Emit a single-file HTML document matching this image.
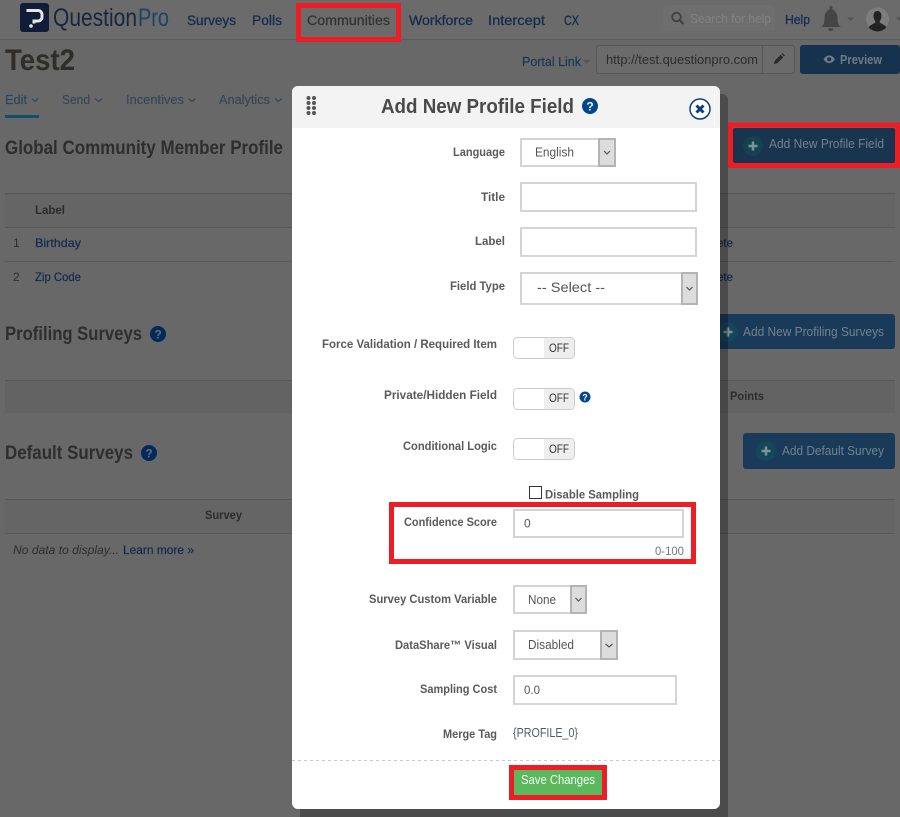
<!DOCTYPE html>
<html lang="en">
<head>
<meta charset="utf-8">
<title>Add New Profile Field</title>
<style>
html,body{margin:0;padding:0;width:900px;height:817px;overflow:hidden;background:#686868}
svg{display:block;position:absolute;left:0;top:0}
text{font-family:"Liberation Sans",sans-serif;white-space:pre}
.nav{font-size:14px;fill:#142a4d;stroke:#142a4d;stroke-width:.25}
.tab{font-size:13px;fill:#35465a;stroke:#35465a;stroke-width:.15}
.h2{font-size:19px;font-weight:bold;fill:#2f2e2e}
.th{font-size:12px;font-weight:bold;fill:#2c2c2c}
.td{font-size:12px;fill:#2d2d2d}
.lk{font-size:12px;fill:#13294f;stroke:#13294f;stroke-width:.2}
.btn{font-size:13px;fill:#74818c}
.lb{font-size:12px;font-weight:bold;fill:#5a5a5a}
.v{font-size:13px;fill:#555}
.off{font-size:12px;fill:#333}
.chev{fill:none;stroke:#555;stroke-width:1.2}
.tchev{fill:none;stroke:#35465a;stroke-width:1.2}
.inp{fill:#fff;stroke:#d4d4d4;stroke-width:2}
.arr{fill:#ddd;stroke:#b4b4b4;stroke-width:2}
.red{fill:none;stroke:#ee1c25;stroke-width:5}
</style>
</head>
<body>
<svg width="900" height="817" viewBox="0 0 900 817" xmlns="http://www.w3.org/2000/svg">
<rect width="900" height="817" fill="#686868"/>

<!-- header -->
<rect x="0" y="0" width="900" height="39" fill="#6b6b6b"/>
<rect x="0" y="39" width="900" height="1" fill="#5c5c5c"/>
<rect x="20" y="3" width="29" height="29" rx="3" fill="#101c38"/>
<path d="M26.5 10.5H38a4 4 0 0 1 4 4v2.500a4 4 0 0 1-4 4h-4v2.500" fill="none" stroke="#e6e6e6" stroke-width="3"/>
<circle cx="31" cy="26" r="1.800" fill="#e6e6e6"/>
<text x="53" y="26" font-size="25" fill="#17263f" textLength="84" lengthAdjust="spacingAndGlyphs">Question</text>
<text x="138" y="26" font-size="25" fill="#1c4468" textLength="31" lengthAdjust="spacingAndGlyphs">Pro</text>
<text class="nav" x="187" y="25" textLength="49" lengthAdjust="spacingAndGlyphs">Surveys</text>
<text class="nav" x="252" y="25" textLength="30" lengthAdjust="spacingAndGlyphs">Polls</text>
<text x="307" y="25" font-size="14" fill="#303030" stroke="#303030" stroke-width=".2" textLength="83" lengthAdjust="spacingAndGlyphs">Communities</text>
<text class="nav" x="409" y="25" textLength="64" lengthAdjust="spacingAndGlyphs">Workforce</text>
<text class="nav" x="488" y="25" textLength="57" lengthAdjust="spacingAndGlyphs">Intercept</text>
<text class="nav" x="564" y="25" textLength="15" lengthAdjust="spacingAndGlyphs">CX</text>
<rect x="663" y="5" width="112" height="26" rx="3" fill="#6e6e6e"/>
<circle cx="676.500" cy="17" r="4.300" fill="none" stroke="#3f3f3f" stroke-width="1.800"/>
<path d="M680 20.500L683.500 24" stroke="#3f3f3f" stroke-width="2"/>
<text x="690" y="23" font-size="13" fill="#828282" textLength="81" lengthAdjust="spacingAndGlyphs">Search for help</text>
<text class="nav" x="785" y="24" style="font-size:13px" textLength="25" lengthAdjust="spacingAndGlyphs">Help</text>
<path d="M821 27c2.800-2 3.500-4 3.500-9 0-5 3-8 5-8.500v-2a1.500 1.500 0 0 1 3 0v2c2 .5 5 3.500 5 8.500 0 5 .7 7 3.500 9z" fill="#454545"/>
<path d="M828 28.500h5.500a2.750 2.500 0 0 1-5.500 0z" fill="#454545"/>
<path d="M847 17.500h7l-3.500 3.500z" fill="#505050"/>
<circle cx="877.500" cy="19" r="11.500" fill="#7d7d7d"/>
<path d="M877.500 11c2.600 0 4 2.200 4 5 0 2.200-1 4-1.800 5v1.500l5 3c.8.400 1.300 1.200 1.500 2a11.500 11.500 0 0 1-17.400 0c.2-.8.700-1.600 1.500-2l5-3V21c-.8-1-1.800-2.800-1.800-5 0-2.800 1.400-5 4-5z" fill="#222"/>
<path d="M896 17.500h4v3.500z" fill="#505050"/>

<!-- title row -->
<text x="5" y="70" font-size="30" font-weight="bold" fill="#2f2d2a" textLength="70" lengthAdjust="spacingAndGlyphs">Test2</text>
<text x="522" y="66" font-size="13" fill="#1b3658" stroke="#1b3658" stroke-width=".2" textLength="59" lengthAdjust="spacingAndGlyphs">Portal Link</text>
<path d="M583 60h7.500l-3.750 3.500z" fill="#555"/>
<rect x="596.500" y="45.500" width="198" height="28" rx="3" fill="#6b6b6b" stroke="#575757"/>
<rect x="762" y="46" width="1" height="27" fill="#575757"/>
<text x="606" y="64" font-size="13" fill="#2c2c2c" textLength="152" lengthAdjust="spacingAndGlyphs">http://test.questionpro.com</text>
<path d="M774 64l.7-3.300 6-6 2.600 2.600-6 6zM781.500 54l1-1 2.500 2.500-1 1z" fill="#2a2a2a"/>
<rect x="800" y="45" width="100" height="29" rx="3" fill="#16324f"/>
<path d="M823.500 59.300c1.500-2.500 3.500-3.800 5.700-3.800s4.200 1.300 5.700 3.800c-1.500 2.500-3.500 3.800-5.700 3.800s-4.200-1.300-5.700-3.800z" fill="#6f7c87"/>
<circle cx="829.200" cy="59.300" r="2" fill="#16324f"/>
<text x="840" y="64" font-size="13" font-weight="bold" fill="#6f7c87" textLength="42" lengthAdjust="spacingAndGlyphs">Preview</text>

<!-- tabs -->
<text class="tab" x="5" y="104" style="fill:#25455f" textLength="22" lengthAdjust="spacingAndGlyphs">Edit</text>
<path class="tchev" d="M32 98.500l3 3 3-3"/>
<rect x="5" y="115" width="34" height="3" fill="#13506f"/>
<text class="tab" x="62" y="104" textLength="28" lengthAdjust="spacingAndGlyphs">Send</text>
<path class="tchev" d="M95 98.500l3.500 3 3.500-3"/>
<text class="tab" x="126" y="104" textLength="58" lengthAdjust="spacingAndGlyphs">Incentives</text>
<path class="tchev" d="M188.500 98.500l3.500 3 3.500-3"/>
<text class="tab" x="219" y="104" textLength="51" lengthAdjust="spacingAndGlyphs">Analytics</text>
<path class="tchev" d="M275 98.500l3.500 3 3.500-3"/>

<text class="h2" x="5" y="154" textLength="278" lengthAdjust="spacingAndGlyphs">Global Community Member Profile</text>

<!-- table 1 -->
<rect x="5" y="193" width="890" height="34" fill="#656565"/>
<rect x="5" y="193" width="890" height="1" fill="#575757"/>
<rect x="5" y="227" width="890" height="1" fill="#595959"/>
<rect x="5" y="261" width="890" height="1" fill="#595959"/>
<text class="th" x="35" y="214" textLength="30" lengthAdjust="spacingAndGlyphs">Label</text>
<text class="td" x="13" y="247">1</text>
<text class="lk" x="35" y="247" textLength="46" lengthAdjust="spacingAndGlyphs">Birthday</text>
<text class="td" x="13" y="281">2</text>
<text class="lk" x="35" y="281" textLength="46" lengthAdjust="spacingAndGlyphs">Zip Code</text>
<text class="lk" x="717" y="247" textLength="16" lengthAdjust="spacingAndGlyphs">ete</text>
<text class="lk" x="717" y="281" textLength="16" lengthAdjust="spacingAndGlyphs">ete</text>

<!-- profiling -->
<text class="h2" x="5" y="340" textLength="137" lengthAdjust="spacingAndGlyphs">Profiling Surveys</text>
<circle cx="158" cy="334" r="8" fill="#002a5e"/>
<text x="158" y="338.500" font-size="12" font-weight="bold" fill="#6b6b6b" text-anchor="middle">?</text>
<rect x="5" y="380" width="890" height="33" fill="#636363"/>
<rect x="5" y="380" width="890" height="1" fill="#575757"/>
<text class="th" x="730" y="400" textLength="34" lengthAdjust="spacingAndGlyphs">Points</text>
<path d="M700 314H892a3 3 0 0 1 3 3v29a3 3 0 0 1-3 3H700z" fill="#1a3a5a"/>
<circle cx="728" cy="332" r="10" fill="#14475a"/>
<path d="M728 327.500v9M723.500 332h9" stroke="#7f929c" stroke-width="2.500"/>
<text class="btn" x="743" y="336" textLength="141" lengthAdjust="spacingAndGlyphs">Add New Profiling Surveys</text>

<!-- default -->
<text class="h2" x="5" y="459" textLength="128" lengthAdjust="spacingAndGlyphs">Default Surveys</text>
<circle cx="149" cy="453" r="8" fill="#002a5e"/>
<text x="149" y="457.500" font-size="12" font-weight="bold" fill="#6b6b6b" text-anchor="middle">?</text>
<rect x="743" y="433" width="152" height="36" rx="3" fill="#1a3a5a"/>
<circle cx="766" cy="451" r="10" fill="#14475a"/>
<path d="M766 446.500v9M761.500 451h9" stroke="#7f929c" stroke-width="2.500"/>
<text class="btn" x="782" y="455" textLength="102" lengthAdjust="spacingAndGlyphs">Add Default Survey</text>
<rect x="5" y="499" width="890" height="34" fill="#656565"/>
<rect x="5" y="499" width="890" height="1" fill="#575757"/>
<rect x="5" y="533" width="890" height="1" fill="#595959"/>
<text class="th" x="205" y="519" textLength="37" lengthAdjust="spacingAndGlyphs">Survey</text>
<text x="13" y="554" font-size="12" font-style="italic" fill="#2d2d2d" textLength="106" lengthAdjust="spacingAndGlyphs">No data to display...</text>
<text class="lk" x="123" y="554" textLength="71" lengthAdjust="spacingAndGlyphs">Learn more »</text>

<!-- top-right button -->
<rect x="733" y="128" width="162" height="35" rx="2" fill="#19344f"/>
<circle cx="753" cy="146" r="10" fill="#14424f"/>
<path d="M753 141.500v9M748.500 146h9" stroke="#7f929c" stroke-width="2.500"/>
<text class="btn" x="769" y="148" textLength="115" lengthAdjust="spacingAndGlyphs">Add New Profile Field</text>

<!-- modal shadow (translucent so page content shows through) -->
<rect x="300" y="94" width="428" height="740" rx="6" fill="#000" fill-opacity=".28"/>

<!-- modal -->
<rect x="292" y="86" width="428" height="723" rx="6" fill="#fff"/>
<path d="M292 128V92a6 6 0 0 1 6-6H714a6 6 0 0 1 6 6V128z" fill="#f3f3f3"/>
<rect x="714" y="91" width="1" height="35" fill="#fff"/>
<g fill="#555">
<circle cx="308.500" cy="98" r="2"/><circle cx="314" cy="98" r="2"/>
<circle cx="308.500" cy="103" r="2"/><circle cx="314" cy="103" r="2"/>
<circle cx="308.500" cy="108" r="2"/><circle cx="314" cy="108" r="2"/>
<circle cx="308.500" cy="113" r="2"/><circle cx="314" cy="113" r="2"/>
</g>
<text x="381" y="113" font-size="20" font-weight="bold" fill="#4a4a4a" textLength="193" lengthAdjust="spacingAndGlyphs">Add New Profile Field</text>
<circle cx="590" cy="106" r="8" fill="#00468c"/>
<text x="590" y="110.500" font-size="12" font-weight="bold" fill="#f3f3f3" text-anchor="middle">?</text>
<circle cx="700" cy="109" r="10" fill="#fff" stroke="#0f3f7a" stroke-width="1.500"/>
<path d="M696.500 105.500l7 7M703.500 105.500l-7 7" stroke="#0f3f7a" stroke-width="3"/>

<!-- Language -->
<text class="lb" x="453" y="156" textLength="52" lengthAdjust="spacingAndGlyphs">Language</text>
<rect class="inp" x="521" y="139" width="94" height="27"/>
<rect class="arr" x="599" y="139" width="16" height="27"/>
<path class="chev" d="M604 151l3 3 3-3"/>
<text class="v" x="535" y="156.500" textLength="39" lengthAdjust="spacingAndGlyphs">English</text>

<!-- Title / Label -->
<text class="lb" x="481" y="201" textLength="24" lengthAdjust="spacingAndGlyphs">Title</text>
<rect class="inp" x="521" y="183" width="175" height="28"/>
<text class="lb" x="475" y="245" textLength="30" lengthAdjust="spacingAndGlyphs">Label</text>
<rect class="inp" x="521" y="228" width="175" height="28"/>

<!-- Field type -->
<text class="lb" x="450" y="290" textLength="55" lengthAdjust="spacingAndGlyphs">Field Type</text>
<rect class="inp" x="521" y="273" width="176" height="31"/>
<rect class="arr" x="682" y="273" width="15" height="31"/>
<path class="chev" d="M686.500 287l3 3 3-3"/>
<text x="537" y="292" font-size="14" fill="#555" textLength="68" lengthAdjust="spacingAndGlyphs">-- Select --</text>

<!-- toggles -->
<text class="lb" x="322" y="348" textLength="175" lengthAdjust="spacingAndGlyphs">Force Validation / Required Item</text>
<rect x="513.500" y="337.500" width="61" height="21" rx="4" fill="#fff" stroke="#ccc"/>
<path d="M544 338h26a4 4 0 0 1 4 4v12a4 4 0 0 1-4 4h-26z" fill="#eee"/>
<text class="off" x="549" y="352" textLength="20" lengthAdjust="spacingAndGlyphs">OFF</text>

<text class="lb" x="384" y="399" textLength="113" lengthAdjust="spacingAndGlyphs">Private/Hidden Field</text>
<rect x="513.500" y="388.500" width="61" height="21" rx="4" fill="#fff" stroke="#ccc"/>
<path d="M544 389h26a4 4 0 0 1 4 4v12a4 4 0 0 1-4 4h-26z" fill="#eee"/>
<text class="off" x="549" y="402" textLength="20" lengthAdjust="spacingAndGlyphs">OFF</text>
<circle cx="585" cy="397" r="5.500" fill="#00468c"/>
<text x="585" y="400.500" font-size="9" font-weight="bold" fill="#fff" text-anchor="middle">?</text>

<text class="lb" x="403" y="450" textLength="94" lengthAdjust="spacingAndGlyphs">Conditional Logic</text>
<rect x="513.500" y="438.500" width="61" height="21" rx="4" fill="#fff" stroke="#ccc"/>
<path d="M544 439h26a4 4 0 0 1 4 4v12a4 4 0 0 1-4 4h-26z" fill="#eee"/>
<text class="off" x="549" y="453" textLength="20" lengthAdjust="spacingAndGlyphs">OFF</text>

<!-- checkbox -->
<rect x="529.500" y="486.500" width="12" height="12" fill="#fff" stroke="#333"/>
<text class="lb" x="545" y="498.500" textLength="94" lengthAdjust="spacingAndGlyphs">Disable Sampling</text>

<!-- confidence -->
<rect class="red" x="391.500" y="504.500" width="302" height="57"/>
<text class="lb" x="404" y="526" textLength="93" lengthAdjust="spacingAndGlyphs">Confidence Score</text>
<rect class="inp" x="514" y="510" width="169" height="27"/>
<text x="524" y="527.500" font-size="12" fill="#555">0</text>
<text x="655" y="555" font-size="12" fill="#777" textLength="29" lengthAdjust="spacingAndGlyphs">0-100</text>

<!-- survey custom variable -->
<text class="lb" x="369" y="603" textLength="128" lengthAdjust="spacingAndGlyphs">Survey Custom Variable</text>
<rect class="inp" x="514" y="586" width="72" height="27"/>
<rect class="arr" x="571" y="586" width="15" height="27"/>
<path class="chev" d="M575.500 598l3 3 3-3"/>
<text class="v" x="528" y="604" textLength="28" lengthAdjust="spacingAndGlyphs">None</text>

<!-- datashare -->
<text class="lb" x="395" y="649" textLength="102" lengthAdjust="spacingAndGlyphs">DataShare™ Visual</text>
<rect class="inp" x="514" y="631" width="103" height="28"/>
<rect class="arr" x="601" y="631" width="16" height="28"/>
<path class="chev" d="M605.500 644l3.500 3 3.500-3"/>
<text class="v" x="528" y="649" textLength="46" lengthAdjust="spacingAndGlyphs">Disabled</text>

<!-- sampling cost -->
<text class="lb" x="420" y="693" textLength="77" lengthAdjust="spacingAndGlyphs">Sampling Cost</text>
<rect class="inp" x="514" y="676" width="162" height="28"/>
<text x="524" y="694" font-size="12" fill="#555" textLength="16" lengthAdjust="spacingAndGlyphs">0.0</text>

<!-- merge tag -->
<text class="lb" x="443" y="738" textLength="54" lengthAdjust="spacingAndGlyphs">Merge Tag</text>
<text x="513" y="737" font-size="13" fill="#4f5b68" textLength="65" lengthAdjust="spacingAndGlyphs">{PROFILE_0}</text>

<line x1="292" y1="760.500" x2="720" y2="760.500" stroke="#ccc" stroke-dasharray="3 3"/>

<!-- save -->
<rect x="511.500" y="767.500" width="93" height="30" fill="#5cb85c" stroke="#ee1c25" stroke-width="5"/>
<text x="521" y="784" font-size="13" fill="#f4fff4" textLength="74" lengthAdjust="spacingAndGlyphs">Save Changes</text>

<!-- red highlight boxes -->
<rect class="red" x="298.500" y="5.500" width="100" height="34"/>
<rect class="red" x="730.500" y="125" width="167" height="40.500"/>
</svg>
</body>
</html>
